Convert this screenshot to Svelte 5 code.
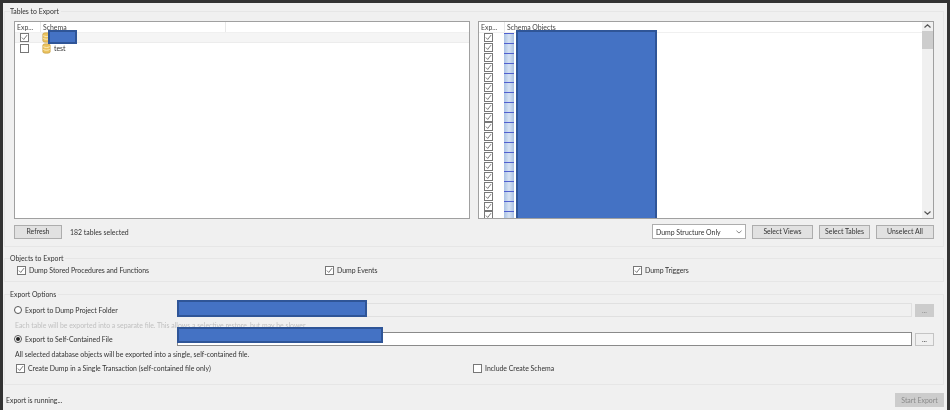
<script>
	const objectRows = Array.from({ length: 19 }, (_, i) => i);
</script>

{#snippet box(checked)}
	<span class="box">
		{#if checked}
			<svg viewBox="0 0 9 9" width="7" height="7"><path d="M1.2 4.6 L3.5 7 L7.8 1.4" fill="none" stroke="#555" stroke-width="1" /></svg>
		{/if}
	</span>
{/snippet}

{#snippet dbIcon()}
	<svg class="db" viewBox="0 0 9 12" width="9" height="11">
		<path d="M.5 2.2 C.5 .4 8.5 .4 8.5 2.2 V9.8 C8.5 11.6 .5 11.6 .5 9.8 Z" fill="#ebc35f" stroke="#c29a3f" stroke-width=".7" />
		<path d="M1 4 C3 5.2 6 5.2 8 4 M1 7 C3 8.2 6 8.2 8 7" fill="none" stroke="#fdf3cf" stroke-width=".9" />
	</svg>
{/snippet}

<div class="window">
	<fieldset class="tables">
		<legend>Tables to Export</legend>
		<div class="lists">
			<div class="list">
				<div class="head left-cols">
					<span>Exp...</span>
					<span>Schema</span>
					<span></span>
				</div>
				<div class="row selected">
					<span class="check-cell">{@render box(true)}</span>
					{@render dbIcon()}
				</div>
				<div class="row">
					<span class="check-cell">{@render box(false)}</span>
					{@render dbIcon()}
					<span class="schema-name">test</span>
				</div>
				<div class="redact schema-redact"></div>
			</div>
			<div class="list objects">
				<div class="objects-main">
					<div class="head right-cols">
						<span>Exp...</span>
						<span>Schema Objects</span>
					</div>
					{#each objectRows as row (row)}
						<div class="obj-row">
							<span class="check-cell">{@render box(true)}</span>
							<span class="table-icon"></span>
						</div>
					{/each}
					<div class="redact objects-redact"></div>
				</div>
				<div class="scrollbar">
					<svg viewBox="0 0 7 4" width="7" height="4"><path d="M.5 3.5 L3.5 .8 L6.5 3.5" fill="none" stroke="#555" stroke-width="1.2" /></svg>
					<span class="thumb"></span>
					<svg class="down" viewBox="0 0 7 4" width="7" height="4"><path d="M.5 .5 L3.5 3.2 L6.5 .5" fill="none" stroke="#555" stroke-width="1.2" /></svg>
				</div>
			</div>
		</div>
		<div class="toolbar">
			<button class="refresh">Refresh</button>
			<span class="count">182 tables selected</span>
			<span class="combo">
				Dump Structure Only
				<svg viewBox="0 0 7 4" width="6" height="4"><path d="M.5 .5 L3.5 3.2 L6.5 .5" fill="none" stroke="#777" stroke-width="1" /></svg>
			</span>
			<button class="views">Select Views</button>
			<button class="select-tables">Select Tables</button>
			<button class="unselect">Unselect All</button>
		</div>
	</fieldset>

	<fieldset class="objects-export">
		<legend>Objects to Export</legend>
		<div class="three">
			<label>{@render box(true)} Dump Stored Procedures and Functions</label>
			<label>{@render box(true)} Dump Events</label>
			<label>{@render box(true)} Dump Triggers</label>
		</div>
	</fieldset>

	<fieldset class="options">
		<legend>Export Options</legend>
		<div class="path-row">
			<label class="radio-label"><span class="radio"></span> Export to Dump Project Folder</label>
			<span class="path disabled"></span>
			<button class="dots disabled-btn">...</button>
			<div class="redact folder-redact"></div>
		</div>
		<p class="hint muted">Each table will be exported into a separate file. This allows a selective restore, but may be slower.</p>
		<div class="path-row">
			<label class="radio-label"><span class="radio on"></span> Export to Self-Contained File</label>
			<span class="path"></span>
			<button class="dots">...</button>
			<div class="redact file-redact"></div>
		</div>
		<p class="hint">All selected database objects will be exported into a single, self-contained file.</p>
		<div class="two">
			<label>{@render box(true)} Create Dump in a Single Transaction (self-contained file only)</label>
			<label>{@render box(false)} Include Create Schema</label>
		</div>
	</fieldset>

	<div class="status">
		<span>Export is running...</span>
		<button class="start">Start Export</button>
	</div>
</div>

<style>
	:global(body) {
		margin: 0;
		background: #f0f0f0;
	}

	.window {
		box-sizing: border-box;
		width: 950px;
		height: 410px;
		padding: 3px 3px 0 1px;
		border: solid #333;
		border-width: 3px 3px 0 3px;
		background: #f0f0f0;
		font: 6.9px/10px Lato, sans-serif;
		color: #333;
		filter: blur(0.3px);
		overflow: hidden;
	}

	fieldset {
		margin: 0;
		padding: 0 9px;
		border: 1px solid #e6e6e6;
		min-width: 0;
	}

	legend {
		padding: 0 2px 0 0;
		margin-left: -4px;
		line-height: 10px;
	}

	.tables {
		box-sizing: border-box;
		height: 241px;
		padding-top: 5px;
	}

	.objects-export {
		box-sizing: border-box;
		height: 29px;
		margin-top: 6px;
		padding-top: 2px;
	}

	.options {
		box-sizing: border-box;
		height: 96px;
		margin-top: 7px;
		padding-top: 4px;
	}

	.lists {
		display: flex;
		gap: 8px;
		height: 198px;
	}

	.list {
		position: relative;
		flex: 1;
		box-sizing: border-box;
		background: #fff;
		border: 1px solid #a0a0a0;
		overflow: hidden;
	}

	.head {
		display: grid;
		height: 11px;
		box-sizing: border-box;
		line-height: 10px;
		background: #fff;
		border-bottom: 1px solid #f0f0f0;
		color: #444;
	}

	.head span {
		padding-left: 2px;
		border-right: 1px solid #e8e8e8;
	}

	.left-cols {
		grid-template-columns: 26px 185px 1fr;
	}

	.right-cols {
		grid-template-columns: 26px 1fr;
	}

	.left-cols span:last-child,
	.right-cols span:last-child {
		border-right: 0;
	}

	.row {
		display: flex;
		align-items: center;
		height: 10px;
	}

	.selected {
		box-sizing: border-box;
		background: #f5f5f5;
		border-bottom: 1px solid #ececec;
	}

	.check-cell {
		display: flex;
		box-sizing: border-box;
		flex: none;
		width: 27px;
		padding-left: 5px;
	}

	.box {
		display: inline-flex;
		align-items: center;
		justify-content: center;
		box-sizing: border-box;
		flex: none;
		width: 9px;
		height: 9px;
		background: #fff;
		border: 1px solid #777;
	}

	.db {
		flex: none;
	}

	.schema-name {
		margin-left: 3px;
	}

	.objects {
		display: flex;
	}

	.objects-main {
		position: relative;
		flex: 1;
		min-width: 0;
	}

	.obj-row {
		display: flex;
		align-items: center;
		height: 9.9px;
	}

	.obj-row .check-cell {
		width: 25px;
	}

	.table-icon {
		box-sizing: border-box;
		width: 10px;
		height: 9.9px;
		border-top: 1px solid #4f5fd0;
		background: linear-gradient(90deg, #a9c1e4, #d6e2f3 50%, #a9c1e4);
	}

	.scrollbar {
		display: flex;
		flex-direction: column;
		align-items: center;
		flex: none;
		width: 11px;
		padding-top: 2px;
		box-sizing: border-box;
		background: #f0f0f0;
	}

	.thumb {
		width: 100%;
		height: 18px;
		margin-top: 3px;
		background: #cdcdcd;
	}

	.down {
		margin-top: auto;
		margin-bottom: 3px;
	}

	.redact {
		position: absolute;
		box-sizing: border-box;
		background: #4472c4;
		border: 2px solid #2f5597;
	}

	.schema-redact {
		left: 33px;
		top: 8px;
		width: 29px;
		height: 14px;
	}

	.objects-redact {
		left: 37px;
		top: 8px;
		width: 141px;
		height: 190px;
	}

	.toolbar {
		display: flex;
		align-items: center;
		height: 15px;
		margin-top: 5px;
	}

	button {
		box-sizing: border-box;
		height: 14px;
		padding: 0;
		background: #e1e1e1;
		border: 1px solid #adadad;
		font: inherit;
		line-height: 11px;
		color: #333;
	}

	.refresh {
		width: 48px;
	}

	.count {
		margin-left: 8px;
	}

	.combo {
		display: flex;
		align-items: center;
		justify-content: space-between;
		box-sizing: border-box;
		width: 94px;
		height: 15px;
		margin-left: auto;
		padding: 0 3px;
		background: #fff;
		border: 1px solid #adadad;
	}

	.views {
		width: 61px;
		margin-left: 6px;
	}

	.select-tables {
		width: 51px;
		margin-left: 6px;
	}

	.unselect {
		width: 58px;
		margin-left: 6px;
	}

	label {
		display: flex;
		align-items: center;
		gap: 3px;
	}

	.three {
		display: grid;
		grid-template-columns: 308px 308px 1fr;
		padding-left: 3px;
	}

	.path-row {
		position: relative;
		display: flex;
		align-items: center;
		height: 14px;
	}

	.radio-label {
		flex: none;
		width: 163px;
	}

	.radio {
		position: relative;
		box-sizing: border-box;
		width: 8px;
		height: 8px;
		background: #fff;
		border: 1px solid #555;
		border-radius: 50%;
	}

	.radio.on::after {
		content: "";
		position: absolute;
		inset: 1px;
		background: #222;
		border-radius: 50%;
	}

	.path {
		flex: 1;
		box-sizing: border-box;
		height: 14px;
		background: #fff;
		border: 1px solid #8a8a8a;
	}

	.path.disabled {
		background: #f0f0f0;
		border-color: #e0e0e0;
	}

	.dots {
		width: 19px;
		height: 13px;
		margin-left: 3px;
		background: #f0f0f0;
		border-color: #c4c4c4;
		line-height: 9px;
	}

	.disabled-btn {
		background: #ccc;
		border-color: #ccc;
		color: #888;
	}

	.folder-redact {
		left: 163px;
		top: -3px;
		width: 190px;
		height: 17px;
	}

	.file-redact {
		left: 163px;
		top: -5px;
		width: 206px;
		height: 16px;
	}

	.hint {
		margin: 0;
		height: 15px;
		padding-top: 3px;
		box-sizing: border-box;
		padding-left: 1px;
	}

	.muted {
		color: #c0c0c0;
	}

	.two {
		display: grid;
		grid-template-columns: 457px 1fr;
		margin-top: 2px;
		padding-left: 2px;
	}

	.status {
		display: flex;
		align-items: center;
		justify-content: space-between;
		height: 14px;
		margin-top: 8px;
		padding-left: 2px;
	}

	.start {
		width: 49px;
		background: #ccc;
		border-color: #ccc;
		color: #8a8a8a;
	}
</style>
